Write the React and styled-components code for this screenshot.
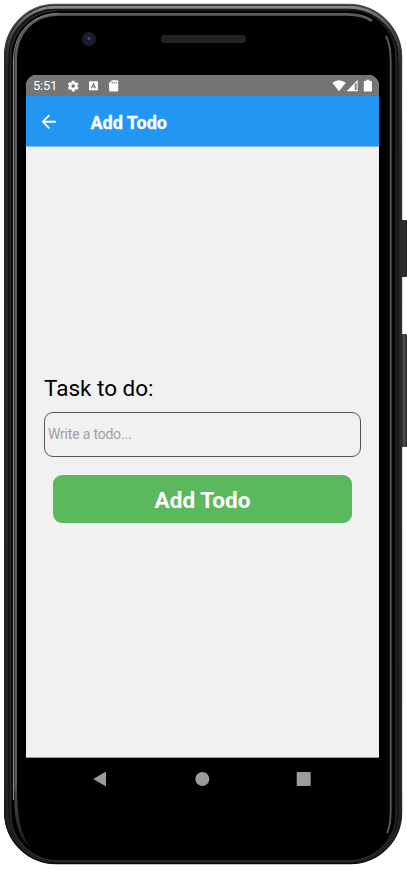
import React from "react";
import styled, { createGlobalStyle } from "styled-components";

const Global = createGlobalStyle`
  * { box-sizing: border-box; }
  body { margin: 0; background: #fff; font-family: Roboto, sans-serif; overflow: hidden; }
`;

const Stage = styled.main`
  position: relative;
  width: 407px;
  height: 870px;
  padding: 4px 4px 5px;
`;

const Shell = styled.div`
  position: relative;
  width: 398px;
  height: 860px;
  padding: 71px 23px 0 22px;
  border-radius: 52px 54px 52px 52px;
  background: #000;
`;

const FrameArt = styled.svg`
  position: absolute;
  left: -4px;
  top: -4px;
  pointer-events: none;
`;

const SideKey = styled.div`
  position: absolute;
  right: 0;
  top: ${(p) => p.$top}px;
  width: 6px;
  height: ${(p) => p.$height}px;
  border-radius: 0 1px 1px 0;
  background: linear-gradient(90deg, #111 0 1px, ${(p) => p.$tone} 2px 4px, #1c1c1c);
`;

const Screen = styled.section`
  position: relative;
  display: flex;
  flex-direction: column;
  width: 353px;
  height: 683px;
  border-radius: 11px 11px 0 0;
  overflow: hidden;
  background: #f1f1f1;
  border-bottom: 1px solid #999;
`;

const StatusBar = styled.div`
  display: flex;
  align-items: center;
  flex: 0 0 21px;
  padding: 1px 6px 0 7px;
  background: #757575;
  color: #fff;
`;

const Clock = styled.time`
  width: 34px;
  font-size: 13px;
  line-height: 20px;
  letter-spacing: -0.25px;
`;

const StatusIcons = styled.svg`
  display: block;
  margin-left: ${(p) => p.$push || "0"};
`;

const AppBar = styled.header`
  display: flex;
  align-items: center;
  flex: 0 0 51px;
  padding: 0 0 0 12px;
  background: #2196f3;
  border-bottom: 1px solid #8fb9e6;
  color: #fff;
`;

const BackButton = styled.button`
  display: flex;
  width: 52.5px;
  padding: 1px 0 0;
  border: 0;
  background: none;
  color: inherit;
`;

const Title = styled.h1`
  margin: 3px 0 0;
  font-size: 18px;
  line-height: 24px;
  font-weight: 700;
  -webkit-text-stroke: 0.3px #fff;
`;

const Form = styled.form`
  display: flex;
  flex-direction: column;
  flex: 1;
  padding: 226px 18px 0;
`;

const Label = styled.label`
  font-size: 22.5px;
  line-height: 30px;
  color: #000;
`;

const Field = styled.input`
  height: 45px;
  margin-top: 8.5px;
  padding: 0 3px 1px;
  border: 1px solid #555;
  border-radius: 9px;
  outline: 0;
  background: transparent;
  font: 400 14px/20px Roboto, sans-serif;
  letter-spacing: -0.2px;
  &::placeholder { color: #a0a0a0; opacity: 1; }
`;

const Submit = styled.button`
  height: 48px;
  margin: 18px 9px 0;
  padding: 4px 0 0;
  border: 0;
  border-radius: 9px;
  background: #5cb85c;
  color: #fff;
  font: 700 22.6px/30px Roboto, sans-serif;
`;

const NavBar = styled.nav`
  position: relative;
  display: flex;
  justify-content: space-between;
  width: 353px;
  padding: 13px 68px 0 66px;
`;

const NavKey = styled.svg`
  display: block;
  fill: #9b9b9b;
`;

const rim = (l, t, r, b, tl, tr, br, bl) =>
  `M${l + tl} ${t}H${r - tr}A${tr} ${tr} 0 0 1 ${r} ${t + tr}V${b - br}A${br} ${br} 0 0 1 ${r - br} ${b}H${l + bl}A${bl} ${bl} 0 0 1 ${l} ${b - bl}V${t + tl}A${tl} ${tl} 0 0 1 ${l + tl} ${t}Z`;

function DeviceFrame() {
  return (
    <FrameArt width="407" height="870" viewBox="0 0 407 870" fill="none" aria-hidden="true">
      <defs>
        <linearGradient id="outer" x1="0" y1="0" x2="0" y2="870" gradientUnits="userSpaceOnUse">
          <stop offset="0.005" stopColor="#555" />
          <stop offset="0.05" stopColor="#3b3b3b" />
          <stop offset="0.9" stopColor="#303030" />
          <stop offset="0.98" stopColor="#080808" />
        </linearGradient>
        <linearGradient id="shine" x1="0" y1="5" x2="0" y2="865" gradientUnits="userSpaceOnUse">
          <stop offset="0" stopColor="#909292" />
          <stop offset="0.008" stopColor="#747676" />
          <stop offset="0.03" stopColor="#454545" />
          <stop offset="0.07" stopColor="#292929" />
          <stop offset="1" stopColor="#222" />
        </linearGradient>
        <linearGradient id="leftGlow" x1="0" y1="770" x2="0" y2="850" gradientUnits="userSpaceOnUse">
          <stop offset="0" stopColor="#555d65" />
          <stop offset="1" stopColor="#15171a" />
        </linearGradient>
      </defs>
      <path d={rim(5, 4.5, 401.5, 863.5, 50, 53, 51, 51)} stroke="url(#outer)" strokeWidth="1.4" />
      <path d={rim(7.2, 7.3, 399.8, 861.6, 48, 51, 49, 49)} stroke="url(#shine)" strokeWidth="3" />
      <path d={rim(10.5, 10.5, 396.3, 861, 46, 48, 47, 47)} stroke="#292929" strokeWidth="2" />
      <path d={rim(9.2, 9.6, 397.2, 862.4, 46, 48, 48, 48)} stroke="#181818" strokeWidth=".8" />
      <path d="M57 11.7H349C374 11.7 392 30 394 54" stroke="#000" strokeWidth="2.5" />
      <path d="M15.7 790V59C16 33 33 14.4 59 14.4H347C357 14.4 365 16 372 21" stroke="#555d65" strokeWidth="2.6" />
      <path d="M14.4 785H17C17 810 19 833 31 848C18 838 14.4 818 14.4 803Z" fill="url(#leftGlow)" />
      <path d="M13.5 800V59C14 32 33 13.5 59 13.5" stroke="#85888a" />
      <path d="M12.4 800V60" stroke="#111" />
      <path d="M386 36C390 44 390.7 51 390.7 61V810C390.7 820 390 827 387 833" stroke="#5a5c62" strokeWidth="1.8" />
      <path d="M393.3 60V810" stroke="#050505" strokeWidth="2" />
      <circle cx="89" cy="39" r="7" fill="#1e1e21" />
      <circle cx="89" cy="39" r="4" fill="#16203a" />
      <circle cx="89" cy="38.5" r="1.5" fill="#3b4f80" />
      <rect x="161" y="35" width="85" height="8" rx="3.5" fill="#222423" />
    </FrameArt>
  );
}

export default function App() {
  return (
    <>
      <Global />
      <Stage>
        <SideKey $top={220} $height={57} $tone="#303030" />
        <SideKey $top={334} $height={113} $tone="#4a4a4a" />
        <Shell>
          <DeviceFrame />
          <Screen>
            <StatusBar>
              <Clock>5:51</Clock>
              <StatusIcons width="54" height="14" viewBox="0 0 54 14" fill="#fff">
                <path transform="translate(-.6 .2) scale(.57)" d="M19.1 12.9a7 7 0 0 0 .1-.9 7 7 0 0 0-.1-.9l2-1.6a.5.5 0 0 0 .1-.6l-1.9-3.3a.5.5 0 0 0-.6-.2l-2.4 1a7 7 0 0 0-1.6-1l-.4-2.5a.5.5 0 0 0-.5-.4h-3.8a.5.5 0 0 0-.5.4l-.4 2.5a7 7 0 0 0-1.6 1l-2.4-1a.5.5 0 0 0-.6.2L2.7 8.9a.5.5 0 0 0 .1.6l2 1.6a7 7 0 0 0 0 1.8l-2 1.6a.5.5 0 0 0-.1.6l1.9 3.3c.1.2.4.3.6.2l2.4-1a7 7 0 0 0 1.6 1l.4 2.5c0 .2.2.4.5.4h3.8c.3 0 .5-.2.5-.4l.4-2.5a7 7 0 0 0 1.6-1l2.4 1c.2.1.5 0 .6-.2l1.9-3.3a.5.5 0 0 0-.1-.6zM12 15.2a3.2 3.2 0 1 1 0-6.4 3.2 3.2 0 0 1 0 6.4z" />
                <rect x="22" y="2.3" width="9" height="9" rx=".8" />
                <path d="m24.5 9.3 2-4.6 2 4.6M25.2 7.7h2.6" stroke="#777" strokeWidth="1.1" fill="none" />
                <path d="M45 1.2h5.2q1 0 1 1v9.3q0 1-1 1h-7.1q-1 0-1-1V4.3z" />
                <path d="M45.2 2.7v2M47.2 2.7v2M49.2 2.7v2" stroke="#757575" strokeWidth=".9" />
              </StatusIcons>
              <StatusIcons $push="auto" width="41" height="14" viewBox="0 0 41 14" fill="#fff">
                <path d="M.3 3.7Q7-1.4 13.8 3.7L7 12.2z" />
                <path d="M25.7 1v11.2H14.5z" />
                <path d="M22.7 5v6.1h2v-7.3" fill="#858585" />
                <path d="M32.3 1.9h2V.7h3.1v1.2h2q.5 0 .5.5v9.5q0 .5-.5.5h-7q-.6 0-.6-.5V2.4q0-.5.5-.5z" />
              </StatusIcons>
            </StatusBar>
            <AppBar>
              <BackButton aria-label="Back">
                <svg width="21.5" height="21.5" viewBox="0 0 24 24" fill="currentColor">
                  <path d="M20 11H7.8l5.6-5.6L12 4l-8 8 8 8 1.4-1.4L7.8 13H20z" />
                </svg>
              </BackButton>
              <Title>Add Todo</Title>
            </AppBar>
            <Form onSubmit={(e) => e.preventDefault()}>
              <Label htmlFor="task">Task to do:</Label>
              <Field id="task" placeholder="Write a todo..." />
              <Submit>Add Todo</Submit>
            </Form>
          </Screen>
          <NavBar>
            <NavKey width="15" height="16"><path d="M1.2 8 13.2 1q.8-.4.8.5v13q0 .9-.8.5z" /></NavKey>
            <NavKey width="16" height="16"><circle cx="8.3" cy="8" r="7" /></NavKey>
            <NavKey width="15" height="16"><rect x=".7" y="1" width="14" height="14" rx="1" /></NavKey>
          </NavBar>
        </Shell>
      </Stage>
    </>
  );
}
